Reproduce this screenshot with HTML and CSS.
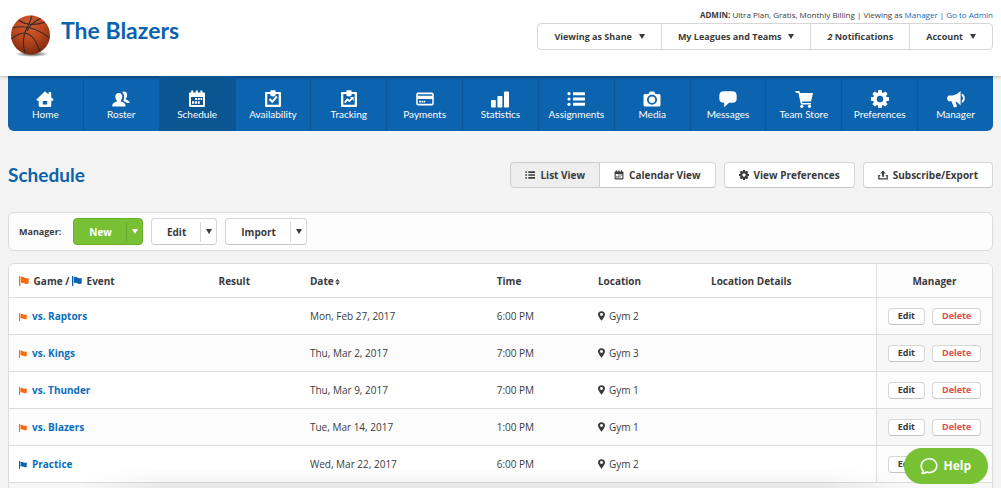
FILE: index.html
```html
<!DOCTYPE html>
<html lang="en">
<head>
  <meta charset="UTF-8">
  <meta name="viewport" content="width=device-width, initial-scale=1">
  <title>The Blazers - Schedule</title>
  <link rel="stylesheet" href="styles.css">
</head>
<body>
  <svg class="sprite" aria-hidden="true">
    <symbol id="i-home" viewBox="0 0 18 18"><path fill-rule="evenodd" d="M9 1.2 12.6 4.600V2h2.600v5.200L17.600 9.500 17 10.700h-1.700V15.500q0 1.500-1.500 1.500H4.200q-1.500 0-1.500-1.500V10.700H1L.4 9.500zM6.800 11v3.500h4.400V11z"/></symbol>
    <symbol id="i-roster" viewBox="0 0 18 18"><path d="M6.800 3C9.400 3 10.500 4.900 10.300 7c-.1 1.500-.7 2.600-1.400 3.300v1.200c1.800.8 4.400 1.500 4.600 3.400V16.500H.3V14.900c.2-1.900 2.800-2.600 4.500-3.400v-1.200C4 9.600 3.400 8.500 3.300 7 3.200 4.900 4.300 3 6.800 3z"/><path d="M10 2.200C11.300 1 14.500 1.100 15 4c.4 2.200-.3 3.600-1.200 4.500v1c1.700.8 3.800 1.300 3.900 3.500h-3c-.8-1-2.300-1.600-3.500-2.100.6-1 1.100-2.300 1-4.100C12.100 4.700 11.300 3.100 10 2.200z"/></symbol>
    <symbol id="i-schedule" viewBox="0 0 18 18"><path fill-rule="evenodd" d="M2 2.500h1.200V.5h2v2h2.600V.5h2v2h2.600V.5h2v2H16q1 0 1 1V15.500q0 1.500-1.500 1.500h-13Q1 17 1 15.500v-12q0-1 1-1zM3 7v8h12V7z"/><path d="M7 8h2v2H7zM9.800 8h2v2h-2zM12.500 8h1.800v2h-1.800zM4 11.200h2.200v2.500H4zM7 11.200h2v2.500H7zM9.800 11.200h2v2.500h-2z"/></symbol>
    <symbol id="i-availability" viewBox="0 0 18 18"><path fill-rule="evenodd" d="M2 2h4.500V.3h5V2H16q1 0 1 1v13q0 1-1 1H2q-1 0-1-1V3q0-1 1-1zm1.300 2v10.700h11.400V4H12q-.3 2.500-3 2.500T6 4z"/><path d="m5.500 9 2.800 2.800 4.500-5.300" fill="none" stroke="currentColor" stroke-width="2"/></symbol>
    <symbol id="i-tracking" viewBox="0 0 18 18"><path fill-rule="evenodd" d="M2 2h4.500V.3h5V2H16q1 0 1 1v13q0 1-1 1H2q-1 0-1-1V3q0-1 1-1zm1.300 2v10.700h11.400V4H12q-.3 2.500-3 2.500T6 4z"/><path d="m4.800 12.800 2.500-3.300 2.200 1.600 2.800-3" fill="none" stroke="currentColor" stroke-width="1.900"/><path d="M10 7h3.700v3.700z"/></symbol>
    <symbol id="i-payments" viewBox="0 0 18 18"><path fill-rule="evenodd" d="M2.200 2.500h13.600q2 0 2 2v9q0 2-2 2H2.200q-2 0-2-2v-9q0-2 2-2zm0 1.800q-.5 0-.5.500v1h14.600v-1q0-.5-.5-.5zM1.700 9v4.200q0 .6.600.6h13.400q.6 0 .6-.6V9z"/><path d="M3.200 10.800h1.800v1.600H3.200zM5.600 10.800h1.400v1.600H5.600zM7.600 10.800h1.600v1.600H7.600z"/></symbol>
    <symbol id="i-statistics" viewBox="0 0 18 18"><rect x="0" y="10" width="4.800" height="7.500" rx=".8"/><rect x="6.400" y="6" width="5" height="11.500" rx=".8"/><rect x="13" y="1.500" width="5" height="16" rx=".8"/></symbol>
    <symbol id="i-list" viewBox="0 0 18 18"><path d="M6 2.200h12v3H6zM6 7.500h12v3H6zM6 12.800h12v3H6z"/><circle cx="2" cy="3.700" r="1.600"/><circle cx="2" cy="9" r="1.600"/><circle cx="2" cy="14.300" r="1.600"/></symbol>
    <symbol id="i-media" viewBox="0 0 18 18"><path fill-rule="evenodd" d="M5.500 4 6.500 2q.3-.5 1-.5h3q.7 0 1 .5l1 2H16q1.500 0 1.500 1.500v9.500q0 1.500-1.500 1.500H2q-1.500 0-1.500-1.500V5.500Q.5 4 2 4zM9 4.800a5 5 0 1 0 0 10 5 5 0 0 0 0-10z"/><circle cx="9" cy="9.800" r="3.200"/></symbol>
    <symbol id="i-messages" viewBox="0 0 18 18"><path d="M5 1.200h8q4.700 0 4.700 4.300v3q0 4.300-4.200 4.300h-3.400L5.200 17.200v-4.400Q.3 12.800.3 8.500v-3Q.3 1.200 5 1.200z"/></symbol>
    <symbol id="i-store" viewBox="0 0 18 18"><path d="M.2 1h3.600q.7 0 .9.800L5 3h13l-1.900 8.500H7l.4 1.500H16v1.600H6L3.400 3H1.500Q.5 2.500.2 1z"/><circle cx="6.800" cy="16.300" r="1.600"/><circle cx="14.500" cy="16.300" r="1.600"/></symbol>
    <symbol id="i-gear" viewBox="0 0 18 18"><circle cx="9" cy="9" r="5" fill="none" stroke="currentColor" stroke-width="3.600"/><path d="M7.300 0h3.400l.6 3.500H6.700zM7.300 18h3.400l.6-3.500H6.700zM0 7.300v3.400l3.500.6V6.700zM18 7.300v3.400l-3.500.6V6.700zM1.400 3.800l2.400-2.400 3 2-3.400 3.400zM16.600 3.800l-2.400-2.400-3 2 3.400 3.400zM1.400 14.200l2.400 2.400 3-2-3.400-3.400zM16.600 14.200l-2.400 2.400-3-2 3.400-3.400z"/></symbol>
    <symbol id="i-manager" viewBox="0 0 18 18"><path d="M1.500 5.500h4.300Q10 4.800 13.600 1v14.500Q10.500 12.200 8.400 11.600l1.700 4.700q-1.500 1.400-3.400.7L4.500 11.200H1.500Q0 9.500 0 8.300T1.500 5.500z"/><path d="M14.800 3.500Q17.800 5 17.800 8.200t-3 4.800v-2.600q1.300-1 1.300-2.200t-1.300-2.200z"/></symbol>
    <symbol id="i-export" viewBox="0 0 18 18"><path d="M9 1 14 6.500h-3.300V12H7.300V6.500H4z"/><path d="M4 10H1.500v6h15v-6H14" fill="none" stroke="currentColor" stroke-width="2.200"/></symbol>
    <symbol id="i-flag" viewBox="0 0 10 10"><path d="M0 0h1.300v10H0zM1.900 1Q4 .4 5.200 1.600 6.500 2.700 9.700 2v5.500Q7 8.400 5.200 7.300 3.800 6.300 1.900 6.800z"/></symbol>
    <symbol id="i-pin" viewBox="0 0 8 11"><path fill-rule="evenodd" d="M4 0Q8 .3 8 3.800 8 6 4 11 0 6 0 3.800 0 .3 4 0zm0 2.100a1.700 1.700 0 1 0 0 3.400 1.700 1.700 0 0 0 0-3.400z"/></symbol>
    <symbol id="i-sort" viewBox="0 0 6 8"><path d="M3 0 6 3.300H0zM3 8 0 4.700h6z"/></symbol>
  </svg>

  <header class="header">
    <div class="brand">
      <svg class="ball" viewBox="0 0 40 44" aria-hidden="true">
        <defs>
          <radialGradient id="ballFill" cx="45%" cy="25%" r="75%">
            <stop offset="0" stop-color="#d0602f"/>
            <stop offset=".5" stop-color="#bb471e"/>
            <stop offset="1" stop-color="#7e280f"/>
          </radialGradient>
          <radialGradient id="ballShadow">
            <stop offset="0" stop-color="#000" stop-opacity=".75"/>
            <stop offset="1" stop-color="#000" stop-opacity="0"/>
          </radialGradient>
        </defs>
        <ellipse cx="21" cy="39" rx="17" ry="3" fill="url(#ballShadow)"/>
        <circle cx="19.500" cy="20" r="19.500" fill="url(#ballFill)"/>
        <g fill="none" stroke="#3a2a28" stroke-width="1.200">
          <path d="M21 .6Q19 8 14.500 16 10.500 26 14 38.500"/>
          <path d="M7.500 5Q18 12.500 34 7.200"/>
          <path d="M1.500 13Q20 8 38.500 23"/>
          <path d="M29.500 3.300Q19 9 16 16"/>
          <path d="M.5 24Q8 17 16 18.500 24 21 29 37"/>
        </g>
      </svg>
      <h1 class="team-name">The Blazers</h1>
    </div>
    <div class="account">
      <p class="admin-line"><strong>ADMIN:</strong> Ultra Plan, Gratis, Monthly Billing | Viewing as <a href="#">Manager</a> | <a href="#">Go to Admin</a></p>
      <div class="account-menu">
        <button type="button">Viewing as Shane <span class="caret"></span></button>
        <button type="button">My Leagues and Teams <span class="caret"></span></button>
        <button type="button"><span><em>2</em> Notifications</span></button>
        <button type="button">Account <span class="caret"></span></button>
      </div>
    </div>
  </header>

  <nav class="nav">
    <a href="#"><svg><use href="#i-home"/></svg>Home</a>
    <a href="#"><svg><use href="#i-roster"/></svg>Roster</a>
    <a href="#" class="active"><svg><use href="#i-schedule"/></svg>Schedule</a>
    <a href="#"><svg><use href="#i-availability"/></svg>Availability</a>
    <a href="#"><svg><use href="#i-tracking"/></svg>Tracking</a>
    <a href="#"><svg><use href="#i-payments"/></svg>Payments</a>
    <a href="#"><svg><use href="#i-statistics"/></svg>Statistics</a>
    <a href="#"><svg><use href="#i-list"/></svg>Assignments</a>
    <a href="#"><svg><use href="#i-media"/></svg>Media</a>
    <a href="#"><svg><use href="#i-messages"/></svg>Messages</a>
    <a href="#"><svg><use href="#i-store"/></svg>Team Store</a>
    <a href="#"><svg><use href="#i-gear"/></svg>Preferences</a>
    <a href="#"><svg><use href="#i-manager"/></svg>Manager</a>
  </nav>

  <main class="content">
    <div class="title-row">
      <h2>Schedule</h2>
      <div class="view-actions">
        <div class="btn-group">
          <button type="button" class="btn selected"><svg><use href="#i-list"/></svg>List View</button>
          <button type="button" class="btn"><svg><use href="#i-schedule"/></svg>Calendar View</button>
        </div>
        <button type="button" class="btn"><svg><use href="#i-gear"/></svg>View Preferences</button>
        <button type="button" class="btn"><svg><use href="#i-export"/></svg>Subscribe/Export</button>
      </div>
    </div>

    <div class="toolbar">
      <span class="toolbar-label">Manager:</span>
      <div class="split split-green">
        <button type="button" class="split-main">New</button>
        <button type="button" class="split-toggle" aria-label="More new options"><span class="caret"></span></button>
      </div>
      <div class="split">
        <button type="button" class="split-main">Edit</button>
        <button type="button" class="split-toggle" aria-label="More edit options"><span class="caret"></span></button>
      </div>
      <div class="split">
        <button type="button" class="split-main">Import</button>
        <button type="button" class="split-toggle" aria-label="More import options"><span class="caret"></span></button>
      </div>
    </div>

    <div class="panel">
      <table class="schedule">
        <colgroup>
          <col class="c-game"><col class="c-result"><col class="c-date"><col class="c-time"><col class="c-location"><col class="c-details"><col class="c-manager">
        </colgroup>
        <thead>
          <tr>
            <th><svg class="flag game"><use href="#i-flag"/></svg> Game / <svg class="flag event"><use href="#i-flag"/></svg> Event</th>
            <th>Result</th>
            <th>Date<svg class="sort"><use href="#i-sort"/></svg></th>
            <th>Time</th>
            <th>Location</th>
            <th>Location Details</th>
            <th class="manage">Manager</th>
          </tr>
        </thead>
        <tbody>
          <tr>
            <td><svg class="flag game"><use href="#i-flag"/></svg><a href="#">vs. Raptors</a></td>
            <td></td><td>Mon, Feb 27, 2017</td><td>6:00 PM</td>
            <td><svg class="pin"><use href="#i-pin"/></svg>Gym 2</td><td></td>
            <td class="manage"><button type="button">Edit</button><button type="button" class="delete">Delete</button></td>
          </tr>
          <tr>
            <td><svg class="flag game"><use href="#i-flag"/></svg><a href="#">vs. Kings</a></td>
            <td></td><td>Thu, Mar 2, 2017</td><td>7:00 PM</td>
            <td><svg class="pin"><use href="#i-pin"/></svg>Gym 3</td><td></td>
            <td class="manage"><button type="button">Edit</button><button type="button" class="delete">Delete</button></td>
          </tr>
          <tr>
            <td><svg class="flag game"><use href="#i-flag"/></svg><a href="#">vs. Thunder</a></td>
            <td></td><td>Thu, Mar 9, 2017</td><td>7:00 PM</td>
            <td><svg class="pin"><use href="#i-pin"/></svg>Gym 1</td><td></td>
            <td class="manage"><button type="button">Edit</button><button type="button" class="delete">Delete</button></td>
          </tr>
          <tr>
            <td><svg class="flag game"><use href="#i-flag"/></svg><a href="#">vs. Blazers</a></td>
            <td></td><td>Tue, Mar 14, 2017</td><td>1:00 PM</td>
            <td><svg class="pin"><use href="#i-pin"/></svg>Gym 1</td><td></td>
            <td class="manage"><button type="button">Edit</button><button type="button" class="delete">Delete</button></td>
          </tr>
          <tr>
            <td><svg class="flag event"><use href="#i-flag"/></svg><a href="#">Practice</a></td>
            <td></td><td>Wed, Mar 22, 2017</td><td>6:00 PM</td>
            <td><svg class="pin"><use href="#i-pin"/></svg>Gym 2</td><td></td>
            <td class="manage"><button type="button">Edit</button><button type="button" class="delete">Delete</button></td>
          </tr>
        </tbody>
        <tfoot>
          <tr><td colspan="7"></td></tr>
        </tfoot>
      </table>
    </div>
  </main>

  <div class="bottom-shade"></div>
  <button type="button" class="help">
    <svg viewBox="0 0 18 18" aria-hidden="true"><path d="M3.300 14.200C.2 11 1 6.500 3.200 4.200 6.500 1 12 1 14.900 4c2.700 3 2.500 7.200-.3 9.700-2.300 2-5.200 2.200-7.800 1.300-1.300 1-3.200 1.600-4.800 1.400.8-.6 1.200-1.300 1.300-2.200z" fill="none" stroke="currentColor" stroke-width="1.700" stroke-linejoin="round"/></svg>
    Help
  </button>
</body>
</html>
```
FILE: styles.css
```css
* {
  box-sizing: border-box;
}
body {
  margin: 0;
  background: #f4f4f4;
  color: #3b3b3b;
  font-family: "Open Sans", sans-serif;
  font-size: 10px;
  line-height: 16px;
}
a {
  color: #0a6ebd;
  text-decoration: none;
}
button {
  font: inherit;
  font-weight: 700;
  color: inherit;
  cursor: pointer;
}
svg {
  fill: currentColor;
}
.sprite {
  display: none;
}
.caret {
  display: inline-block;
  border: 3px solid transparent;
  border-top: 5px solid currentColor;
  border-bottom: 0;
}

/* header */
.header {
  display: flex;
  justify-content: space-between;
  height: 76px;
  padding: 0 8px;
  background: #fff;
  box-shadow: 0 1px 3px rgba(0, 0, 0, 0.25);
}
.brand {
  display: flex;
  padding: 15px 0 0 3px;
  gap: 10px;
}
.ball {
  width: 40px;
  height: 44px;
}
.team-name,
.title-row h2 {
  margin: 0;
  color: #0b62ad;
  font-family: Lato, sans-serif;
  font-weight: 700;
}
.team-name {
  font-size: 23px;
  line-height: 30px;
}
.admin-line {
  margin: 0;
  padding-top: 8px;
  font-size: 8px;
  line-height: 14px;
  text-align: right;
}
.account-menu {
  display: flex;
  margin-top: 1px;
  border: 1px solid #d6d6d6;
  border-radius: 4px;
}
.account-menu button {
  display: flex;
  align-items: center;
  height: 25px;
  gap: 7px;
  padding: 0 16px;
  font-size: 9px;
  background: none;
  border: 0;
}
.account-menu button + button {
  border-left: 1px solid #d6d6d6;
}

/* main navigation */
.nav {
  display: flex;
  position: relative;
  margin: 0 8px;
  background: #0c63ae;
  border-radius: 0 0 6px 6px;
  box-shadow: inset 0 3px 2px -1px rgba(0, 0, 0, 0.25);
  overflow: hidden;
}
.nav a {
  flex: 1 1 0;
  display: flex;
  flex-direction: column;
  align-items: center;
  height: 55px;
  padding-top: 14px;
  color: #fff;
  font-family: Lato, sans-serif;
  font-size: 10px;
  line-height: 12px;
  border-right: 1px solid #0a5699;
}
.nav a:last-child {
  border-right: 0;
}
.nav a.active {
  background: #0a5592;
}
.nav svg {
  width: 18px;
  height: 18px;
}

/* page title and view buttons */
.content {
  padding: 31px 8px 0;
}
.title-row {
  display: flex;
  align-items: center;
  justify-content: space-between;
}
.title-row h2 {
  font-size: 19px;
  line-height: 26px;
}
.view-actions {
  display: flex;
  gap: 8px;
}
.btn-group {
  display: flex;
}
.btn {
  display: flex;
  align-items: center;
  gap: 5px;
  height: 26px;
  padding: 0 14px;
  background: #fff;
  border: 1px solid #d6d6d6;
  border-bottom-color: #c8c8c8;
  border-radius: 4px;
}
.btn svg {
  width: 10px;
  height: 10px;
}
.btn-group .btn:first-child {
  border-radius: 4px 0 0 4px;
}
.btn-group .btn:last-child {
  border-left: 0;
  border-radius: 0 4px 4px 0;
}
.btn.selected {
  background: #eee;
  border-color: #ccc;
}

/* manager toolbar */
.toolbar {
  display: flex;
  align-items: center;
  gap: 8px;
  height: 39px;
  margin-top: 24px;
  padding: 0 10px;
  background: #fdfdfd;
  border: 1px solid #dcdcdc;
  border-radius: 6px;
}
.toolbar-label {
  margin-right: 4px;
  font-size: 9px;
  font-weight: 700;
}
.split {
  display: flex;
  align-items: center;
  height: 27px;
  background: #fff;
  border: 1px solid #d6d6d6;
  border-bottom-color: #c8c8c8;
  border-radius: 4px;
}
.split button {
  background: none;
  border: 0;
}
.split .split-main {
  padding: 0 14px 0 15px;
}
.split .split-toggle {
  display: flex;
  align-items: center;
  height: 20px;
  padding: 0 4px 0 5px;
  border-left: 1px solid #d6d6d6;
}
.split-green {
  color: #fff;
  background: #78c135;
  border-color: #6bb02d;
}
.split-green .split-toggle {
  border-left-color: #67a92c;
}

/* schedule table */
.panel {
  margin-top: 12px;
  background: #fff;
  border: 1px solid #dcdcdc;
  border-radius: 6px 6px 0 0;
  overflow: hidden;
}
.schedule {
  width: 100%;
  table-layout: fixed;
  border-collapse: separate;
  border-spacing: 0;
}
.c-game { width: 20.3%; }
.c-result { width: 9.3%; }
.c-date { width: 19%; }
.c-time { width: 10.3%; }
.c-location { width: 11.5%; }
.c-details { width: 17.8%; }
.c-manager { width: 11.8%; }
.schedule th,
.schedule td {
  height: 37px;
  padding: 0 0 0 10px;
  text-align: left;
  white-space: nowrap;
  border-bottom: 1px solid #dcdcdc;
}
.schedule th {
  height: 34px;
  font-weight: 700;
}
.schedule tbody tr:nth-child(even) {
  background: #fcfcfc;
}
.schedule .manage {
  padding: 0;
  text-align: center;
  background: #fcfcfc;
  border-left: 1px solid #dcdcdc;
}
.schedule tr:nth-child(even) .manage {
  background: #f7f7f7;
}
.schedule td a {
  font-weight: 700;
}
.schedule tfoot td {
  height: 5px;
  border-bottom: 0;
  background: #f7f7f7;
}
.manage button {
  height: 17px;
  padding: 0 9px;
  font-size: 9px;
  line-height: 14px;
  background: #fff;
  border: 1px solid #d6d6d6;
  border-bottom-color: #c4c4c4;
  border-radius: 4px;
}
.manage .delete {
  margin-left: 7px;
  color: #dc4f4a;
}
.flag {
  width: 8px;
  height: 8px;
  margin-right: 5px;
  vertical-align: -1px;
}
th .flag {
  width: 10px;
  height: 10px;
  margin-right: 2px;
}
.game {
  color: #f96a0e;
}
.event {
  color: #0b62ad;
}
.pin {
  width: 7px;
  height: 10px;
  margin-right: 4px;
  vertical-align: -1px;
}
.sort {
  width: 5px;
  height: 6px;
  margin-left: 1px;
}

/* floating items */
.bottom-shade {
  position: fixed;
  left: 8%;
  right: 10%;
  bottom: 0;
  height: 20px;
  background: linear-gradient(rgba(0, 0, 0, 0), rgba(0, 0, 0, 0.06));
  -webkit-mask-image: linear-gradient(90deg, transparent, #000 10%, #000 90%, transparent);
  mask-image: linear-gradient(90deg, transparent, #000 10%, #000 90%, transparent);
  pointer-events: none;
}
.help {
  position: fixed;
  right: 13px;
  bottom: 4px;
  display: flex;
  align-items: center;
  gap: 5px;
  height: 36px;
  padding: 0 17px 0 16px;
  color: #fff;
  font-size: 12px;
  background: #78c135;
  border: 0;
  border-radius: 18px;
}
.help svg {
  width: 18px;
  height: 18px;
}
```
